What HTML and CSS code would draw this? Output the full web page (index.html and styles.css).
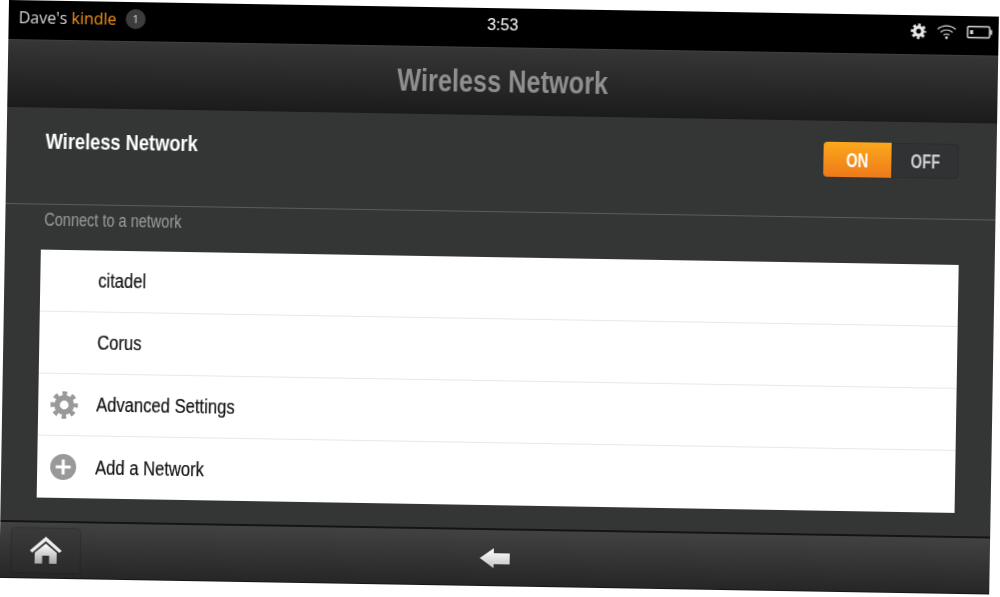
FILE: index.html
```html
<!DOCTYPE html>
<html lang="en">

<head>
    <meta charset="UTF-8" />
    <meta name="viewport" content="width=device-width, initial-scale=1.0" />
    <title>Wireless Network</title>
    <link rel="stylesheet" href="styles.css">
</head>

<body>
    <div class="screen">
        <div class="status">
            <div class="owner">
                <span>Dave's <span class="brand">kindle</span></span>
                <span class="badge">1</span>
            </div>
            <div class="clock">3:53</div>
            <div class="tray">
                <svg width="16" height="16" viewBox="-9 -9 18 18">
                    <circle r="4.6" fill="none" stroke="#e8e8e8" stroke-width="3.6" />
                    <circle r="6.9" fill="none" stroke="#e8e8e8" stroke-width="3.6" stroke-dasharray="2.9 2.52" stroke-dashoffset="1.45" />
                </svg>
                <svg width="20" height="16" viewBox="0 0 20 16">
                    <path d="M1 5.5C6 1 14 1 19 5.5M4 8.5C7.5 5.5 12.5 5.5 16 8.5M7 11.3C8.8 10 11.2 10 13 11.3" fill="none" stroke="#dcdcdc" stroke-width="1.1" />
                    <circle cx="10" cy="14" r="1.4" fill="#dcdcdc" />
                </svg>
                <svg width="26" height="14" viewBox="0 0 26 14">
                    <rect x="1" y="1.5" width="22" height="11" rx="1" fill="none" stroke="#dcdcdc" stroke-width="1.4" />
                    <rect x="3.5" y="5" width="3" height="4" fill="#dcdcdc" />
                    <rect x="23.5" y="4.5" width="2" height="5" fill="#dcdcdc" />
                </svg>
            </div>
        </div>

        <header class="title-bar"><span class="narrow-center">Wireless Network</span></header>

        <main class="content">
            <section class="setting">
                <div class="setting-name"><span class="narrow">Wireless Network</span></div>
                <div class="toggle">
                    <div class="toggle-on"><span class="narrow-center">ON</span></div>
                    <div class="toggle-off"><span class="narrow-center">OFF</span></div>
                </div>
            </section>

            <div class="section-label"><span class="narrow">Connect to a network</span></div>

            <ul class="network-list">
                <li class="network-row"><span class="narrow">citadel</span></li>
                <li class="network-row"><span class="narrow">Corus</span></li>
                <li class="network-row">
                    <svg class="row-icon" width="28" height="28" viewBox="-14 -14 28 28">
                        <circle r="7.2" fill="none" stroke="#999" stroke-width="5.6" />
                        <circle r="11" fill="none" stroke="#999" stroke-width="5.4" stroke-dasharray="4.4 4.24" stroke-dashoffset="2.2" />
                    </svg>
                    <span class="narrow">Advanced Settings</span>
                </li>
                <li class="network-row">
                    <svg class="row-icon" width="28" height="28" viewBox="-14 -14 28 28">
                        <circle r="13" fill="#999" />
                        <path d="M-7.5 0H7.5M0 -7.5V7.5" stroke="#fff" stroke-width="3" />
                    </svg>
                    <span class="narrow">Add a Network</span>
                </li>
            </ul>
        </main>

        <footer class="nav-bar">
            <button class="home-btn">
                <svg width="34" height="30" viewBox="0 0 34 30">
                    <defs>
                        <linearGradient id="home-fill" x1="0" y1="0" x2="0" y2="1">
                            <stop offset="0" stop-color="#fff" />
                            <stop offset="1" stop-color="#a8a8a8" />
                        </linearGradient>
                    </defs>
                    <path d="M1 15L17 1L33 15L30.5 17L17 5.5L3.5 17Z" fill="#eee" />
                    <path d="M6 17L17 8L28 17V28H20.5V20H13.5V28H6Z" fill="url(#home-fill)" />
                </svg>
            </button>
            <svg class="back-arrow" width="32" height="22" viewBox="0 0 32 22">
                <defs>
                    <linearGradient id="back-fill" x1="0" y1="0" x2="0" y2="1">
                        <stop offset="0" stop-color="#fff" />
                        <stop offset="1" stop-color="#c4c4c4" />
                    </linearGradient>
                </defs>
                <path d="M1 11L15 1V6H31V17H15V21Z" fill="url(#back-fill)" />
            </svg>
            <div></div>
        </footer>
    </div>
</body>

</html>
```

FILE: styles.css
```css
* {
    box-sizing: border-box;
    margin: 0;
    padding: 0;
}

html,
body {
    height: 100%;
    overflow: hidden;
}

body {
    background-color: white;
    font-family: 'Liberation Sans', Arial, sans-serif;
}

/* the tablet font is condensed, no narrow family is installed */
.narrow,
.narrow-center {
    display: inline-block;
    transform: scaleX(0.83);
    transform-origin: left center;
}

.narrow-center {
    transform-origin: center;
}

.screen {
    display: flex;
    flex-direction: column;
    width: 990px;
    height: 578px;
    margin-left: 9px;
    background-color: #343635;
    transform: rotate(0.96deg);
    transform-origin: top left;
    filter: blur(0.4px);
}

.status {
    display: grid;
    grid-template-columns: 1fr auto 1fr;
    align-items: center;
    height: 39px;
    padding: 0 6px 6px 10px;
    background-color: black;
    color: #d8d8d8;
}

.owner {
    display: flex;
    align-items: center;
    gap: 9px;
    font-family: 'Open Sans', sans-serif;
    font-size: 16px;
}

.brand {
    color: #f5961a;
}

.badge {
    display: flex;
    justify-content: center;
    align-items: center;
    width: 20px;
    height: 20px;
    border-radius: 50%;
    background-color: #3c3c3c;
    font-size: 11px;
}

.clock {
    padding-right: 6px;
    color: white;
    font-size: 16px;
}

.tray {
    display: flex;
    justify-content: flex-end;
    align-items: center;
    gap: 10px;
    margin-bottom: 2px;
}

.title-bar {
    display: flex;
    justify-content: center;
    align-items: center;
    height: 68px;
    background: linear-gradient(#363636, #1b1b1b);
    border-top: 1px solid #3f3f3f;
    color: #8f8f8f;
    font-size: 30.5px;
    font-weight: bold;
}

.content {
    flex: 1;
    padding: 0 36px;
}

.setting {
    display: flex;
    justify-content: space-between;
    height: 97px;
    margin: 0 -36px;
    padding: 21px 38px 0 39px;
    border-bottom: 1px solid #5a5c5b;
}

.setting-name {
    color: white;
    font-size: 22px;
    font-weight: bold;
}

.toggle {
    display: flex;
    width: 135px;
    height: 35px;
    font-size: 21px;
    font-weight: bold;
    line-height: 35px;
    text-align: center;
}

.toggle .narrow-center {
    transform: scaleX(0.7);
}

.toggle-on {
    width: 68px;
    border-radius: 4px 0 0 4px;
    background: linear-gradient(#fba81b, #ef7a1a);
    color: white;
}

.toggle-off {
    flex: 1;
    border: 1px solid #2a2c2d;
    border-radius: 0 4px 4px 0;
    background-color: #303233;
    color: #d0d0d0;
    line-height: 33px;
}

.section-label {
    height: 45px;
    padding: 5px 3px 0;
    color: #9c9c9c;
    font-size: 17.5px;
}

.network-list {
    list-style: none;
    background-color: white;
}

.network-row {
    display: flex;
    align-items: center;
    height: 62px;
    padding-left: 58px;
    border-bottom: 1px solid #e8e8e8;
    color: #111;
    font-size: 20px;
    -webkit-text-stroke: 0.2px #111;
}

.network-row:last-child {
    border-bottom: none;
}

.row-icon {
    margin-left: -46px;
    margin-right: 18px;
}

.nav-bar {
    display: grid;
    grid-template-columns: 1fr auto 1fr;
    align-items: center;
    height: 58px;
    padding: 0 12px;
    background: linear-gradient(#424242, #262626);
    border-top: 2px solid #141414;
    border-bottom: 1px solid #161616;
}

.home-btn {
    display: flex;
    justify-content: center;
    align-items: center;
    width: 68px;
    height: 44px;
    border: none;
    border-radius: 4px;
    background: linear-gradient(#3a3a3a, #2a2a2a);
    box-shadow: 0 0 2px #161616;
}
```
